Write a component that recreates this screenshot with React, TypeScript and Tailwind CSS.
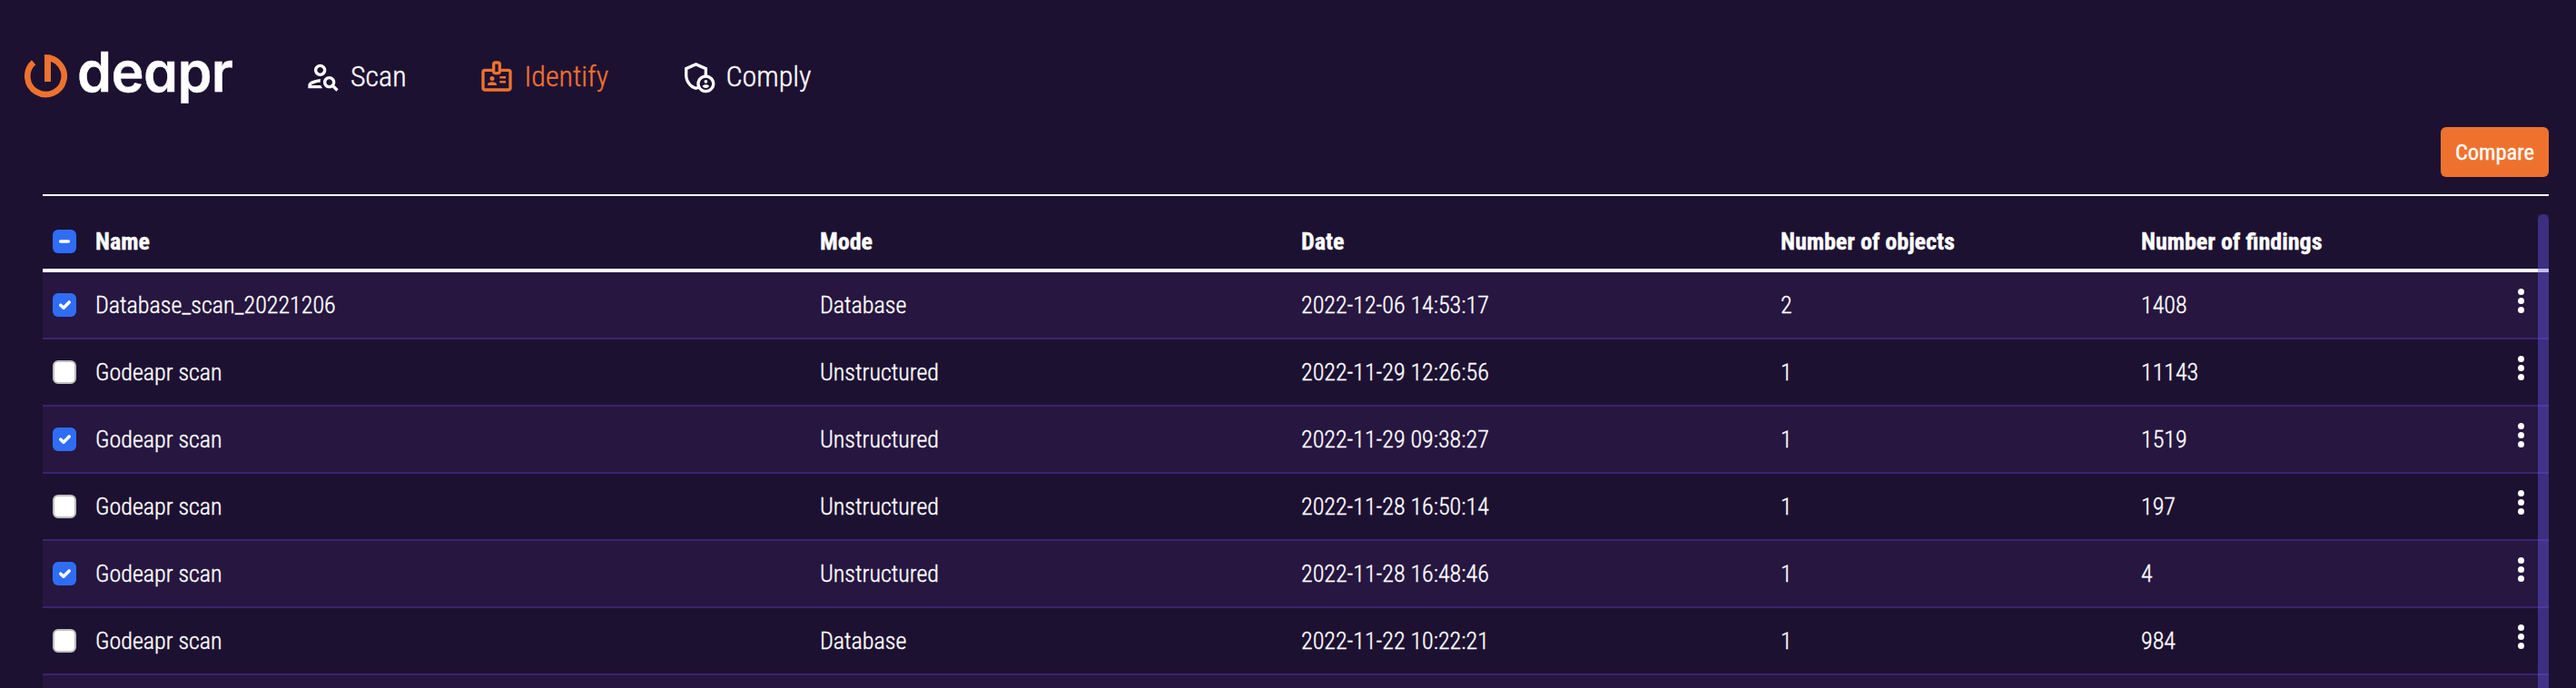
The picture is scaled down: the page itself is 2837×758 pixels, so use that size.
import { MdOutlinePersonSearch, MdOutlineBadge, MdOutlineAdminPanelSettings } from "react-icons/md";

const rows = [
  { name: "Database_scan_20221206", mode: "Database", date: "2022-12-06 14:53:17", objects: "2", findings: "1408", checked: true },
  { name: "Godeapr scan", mode: "Unstructured", date: "2022-11-29 12:26:56", objects: "1", findings: "11143", checked: false },
  { name: "Godeapr scan", mode: "Unstructured", date: "2022-11-29 09:38:27", objects: "1", findings: "1519", checked: true },
  { name: "Godeapr scan", mode: "Unstructured", date: "2022-11-28 16:50:14", objects: "1", findings: "197", checked: false },
  { name: "Godeapr scan", mode: "Unstructured", date: "2022-11-28 16:48:46", objects: "1", findings: "4", checked: true },
  { name: "Godeapr scan", mode: "Database", date: "2022-11-22 10:22:21", objects: "1", findings: "984", checked: false },
];

const grid = "grid grid-cols-[58px_798px_530px_528px_397px_449px]";

function Checkbox({ state }: { state: "on" | "off" | "mixed" }) {
  if (state === "off") {
    return <span className="block size-[26px] rounded-[6px] border-2 border-[#bfbfbf] bg-white" />;
  }
  return (
    <span className="block size-[26px] rounded-[6px] bg-[#2f6df6]">
      <svg viewBox="0 0 26 26" className="size-full" fill="none" stroke="white" strokeWidth="3.6" strokeLinecap="round" strokeLinejoin="round">
        {state === "on" ? <path d="M8.8 13.2l3.2 3 6.2-6.2" /> : <path d="M8.6 13h8.8" />}
      </svg>
    </span>
  );
}

export default function App() {
  return (
    <div className="flex h-[758px] w-[2837px] flex-col overflow-hidden bg-[#1d1132] font-['Roboto_Condensed','Roboto',sans-serif] font-light text-white [-webkit-text-stroke:0.35px_currentColor] [font-stretch:75%]">
      <header className="flex h-[140px] shrink-0 items-start pl-[27px]">
        <div className="flex w-[309px] items-start">
          <svg viewBox="0 0 47 48" className="mt-[60px] h-[48px] w-[47px]" fill="none">
            <path d="M10.1 8.7A20.2 20.2 0 1 0 22 3.7" stroke="#ee722e" strokeWidth="6.6" />
            <path d="M25.5 .5V30" stroke="#ee722e" strokeWidth="7" />
          </svg>
          <span className="mt-[39px] ml-[11px] font-['Inter',sans-serif] text-[61px] leading-[80px] font-semibold tracking-[-0.6px] [font-feature-settings:'cv11'] [font-stretch:100%]">deapr</span>
        </div>
        <nav className="mt-[64px] flex h-[40px] items-center text-[32px] leading-[40px]">
          <a className="flex w-[191px] items-center"><MdOutlinePersonSearch className="mr-[10px] size-[40px]" />Scan</a>
          <a className="flex w-[222px] items-center text-[#ee722e]"><MdOutlineBadge className="mr-[10.5px] size-[40px]" />Identify</a>
          <a className="flex items-center"><MdOutlineAdminPanelSettings className="mr-[10.5px] size-[40px]" />Comply</a>
        </nav>
      </header>
      <main className="ml-[47px] flex w-[2760px] flex-col">
        <button className="h-[55px] w-[119px] self-end rounded-[6px] bg-[#ee722e] text-[24.5px] leading-[51px] font-normal">Compare</button>
        <div className="mt-[19px] h-[2px] shrink-0 bg-white" />
        <section className="relative mt-[20px]">
          <div className={`${grid} h-[64px] border-b-4 border-white text-[26px] leading-[60px] font-bold`}>
            <div className="pt-[17px] pl-[11px]"><Checkbox state="mixed" /></div>
            <div>Name</div><div>Mode</div><div>Date</div><div>Number of objects</div><div>Number of findings</div>
          </div>
          {rows.map((r, i) => (
            <div key={i} className={`${grid} h-[74px] border-b-2 border-[#3d2270] text-[26px] leading-[72px] odd:bg-[#1d1132] even:bg-[#261640]`}>
              <div className="pt-[23px] pl-[11px]"><Checkbox state={r.checked ? "on" : "off"} /></div>
              <div>{r.name}</div><div>{r.mode}</div><div>{r.date}</div><div>{r.objects}</div>
              <div className="flex justify-between">
                {r.findings}
                <span className="mt-[17.5px] mr-[27px] flex h-[27px] w-[7px] flex-col justify-between">
                  <i className="size-[7px] rounded-full bg-white" />
                  <i className="size-[7px] rounded-full bg-white" />
                  <i className="size-[7px] rounded-full bg-white" />
                </span>
              </div>
            </div>
          ))}
          <div className="h-[14px] bg-[#261640]" />
          <div className="absolute top-0 right-0 h-full w-[12px] bg-[rgba(105,93,240,0.12)]">
            <div className="h-full w-full rounded-t-[6px] bg-[rgba(105,93,240,0.33)]" />
          </div>
        </section>
      </main>
    </div>
  );
}
